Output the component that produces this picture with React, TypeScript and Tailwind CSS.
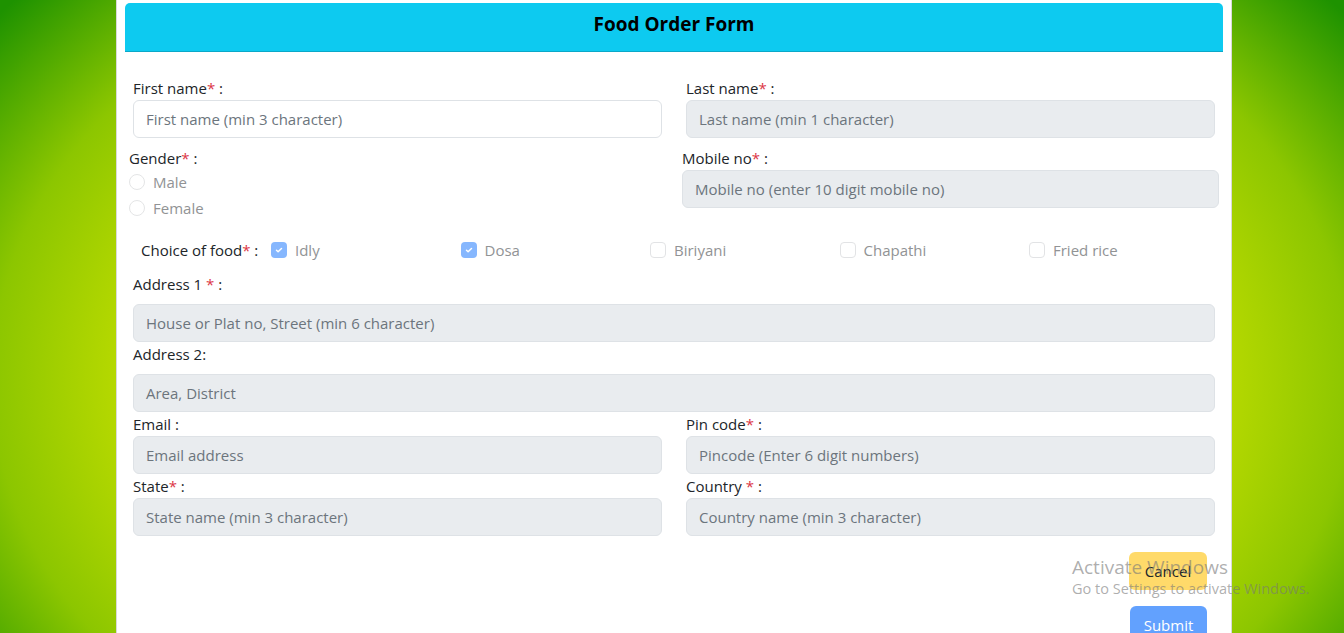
import React from "react";

const font = { fontFamily: '"Open Sans", "Noto Sans", sans-serif' };

function Req({ space }: { space?: boolean }) {
  return (
    <>
      {space ? " " : ""}
      <span className="text-[#dc3545]">*</span>
    </>
  );
}

function Label({ children }: { children: React.ReactNode }) {
  return <div className="h-6 leading-6 text-[15px] text-[#212529]">{children}</div>;
}

function Input({ placeholder, disabled = true }: { placeholder: string; disabled?: boolean }) {
  return (
    <div
      className={`h-[38px] rounded-[6px] border border-[#dee2e6] px-3 flex items-center text-[15px] text-[#6c757d] ${
        disabled ? "bg-[#e9ecef]" : "bg-white"
      }`}
    >
      {placeholder}
    </div>
  );
}

function Check({ checked, label }: { checked?: boolean; label: string }) {
  return (
    <div className="w-[189.5px] flex items-center gap-2 shrink-0">
      {checked ? (
        <div className="w-4 h-4 rounded-[4px] bg-[#86b7fe] flex items-center justify-center">
          <svg width="10" height="10" viewBox="0 0 20 20">
            <path d="M5 10.5l3.2 3L15 7" fill="none" stroke="#fff" strokeWidth="3" strokeLinecap="round" strokeLinejoin="round" />
          </svg>
        </div>
      ) : (
        <div className="w-4 h-4 rounded-[4px] border border-[#e2e3e5] bg-white" />
      )}
      <span className="text-[15px] text-[#919395]">{label}</span>
    </div>
  );
}

function Radio({ label }: { label: string }) {
  return (
    <div className="h-6 mb-[2px] flex items-center gap-2">
      <div className="w-4 h-4 rounded-full border border-[#e4e5e6] bg-white" />
      <span className="text-[15px] text-[#919395]">{label}</span>
    </div>
  );
}

export default function App() {
  return (
    <div
      className="min-h-screen w-full pl-[116px] bg-[radial-gradient(ellipse_850px_600px_at_672px_380px,#c4df00_60%,#8cc600_80%,#1e9200_100%)]"
      style={font}
    >
      <div className="w-[1116px] bg-white border-x border-[#d9d9d9] pt-[3px] px-2 pb-10 relative">
        <div className="h-[49px] rounded-t-[5px] bg-[#0dcaf0] border-b border-[#0ba8c8] flex items-center justify-center pb-[6px]">
          <h1 className="text-[19px] font-bold text-black">Food Order Form</h1>
        </div>

        <div className="pt-[24px]">
          <div className="px-2 grid grid-cols-2 gap-6">
            <div>
              <Label>
                First name<Req /> :
              </Label>
              <Input placeholder="First name (min 3 character)" disabled={false} />
            </div>
            <div>
              <Label>
                Last name<Req /> :
              </Label>
              <Input placeholder="Last name (min 1 character)" />
            </div>
          </div>

          <div className="px-1 mt-2 flex">
            <div className="flex-1">
              <Label>
                Gender<Req /> :
              </Label>
              <Radio label="Male" />
              <Radio label="Female" />
            </div>
            <div className="w-[537px]">
              <Label>
                Mobile no<Req /> :
              </Label>
              <Input placeholder="Mobile no (enter 10 digit mobile no)" />
            </div>
          </div>

          <div className="mt-[16px] pl-4 flex items-center h-6">
            <div className="w-[130px] shrink-0 text-[15px] text-[#212529]">
              Choice of food<Req /> :
            </div>
            <Check checked label="Idly" />
            <Check checked label="Dosa" />
            <Check label="Biriyani" />
            <Check label="Chapathi" />
            <Check label="Fried rice" />
          </div>

          <div className="px-2 mt-[10px]">
            <div className="mb-2">
              <Label>
                Address 1<Req space /> :
              </Label>
            </div>
            <Input placeholder="House or Plat no, Street (min 6 character)" />
            <div className="mb-2">
              <Label>Address 2:</Label>
            </div>
            <Input placeholder="Area, District" />
          </div>

          <div className="px-2 grid grid-cols-2 gap-x-6">
            <div>
              <Label>Email :</Label>
              <Input placeholder="Email address" />
            </div>
            <div>
              <Label>
                Pin code<Req /> :
              </Label>
              <Input placeholder="Pincode (Enter 6 digit numbers)" />
            </div>
            <div>
              <Label>
                State<Req /> :
              </Label>
              <Input placeholder="State name (min 3 character)" />
            </div>
            <div>
              <Label>
                Country<Req space /> :
              </Label>
              <Input placeholder="Country name (min 3 character)" />
            </div>
          </div>

          <div className="pr-4 mt-4 flex flex-col items-end gap-4">
            <button className="w-[78px] h-[38px] rounded-[6px] bg-[#ffda6a] text-[15px] text-[#212529]">Cancel</button>
            <button className="w-[77px] h-[38px] rounded-[6px] bg-[#62a1fe] text-[15px] text-white">Submit</button>
          </div>
        </div>
      </div>

      <div className="absolute left-[1072px] top-[554px] pointer-events-none text-[rgba(120,120,120,0.6)]" style={{ fontFamily: '"Open Sans", sans-serif' }}>
        <div className="text-[19px] leading-[26px]">Activate Windows</div>
        <div className="text-[14.5px] leading-[18px]">Go to Settings to activate Windows.</div>
      </div>
    </div>
  );
}
